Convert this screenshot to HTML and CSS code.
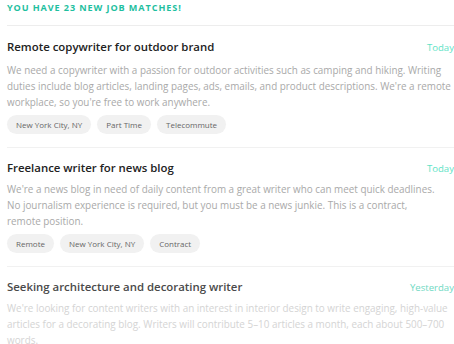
FILE: index.html
```html
<!DOCTYPE html>
<html lang="en">
<head>
  <meta charset="UTF-8">
  <title>Job Matches</title>
  <link rel="stylesheet" href="styles.css">
</head>
<body>
  <div class="matches">
    <h2 class="matches-title">You have 23 new job matches!</h2>

    <div class="job">
      <div class="job-head">
        <h3 class="job-title">Remote copywriter for outdoor brand</h3>
        <span class="job-date">Today</span>
      </div>
      <p class="job-desc">We need a copywriter with a passion for outdoor activities such as camping and hiking. Writing duties include blog articles, landing pages, ads, emails, and product descriptions. We're a remote workplace, so you're free to work anywhere.</p>
      <div class="tags">
        <span class="tag">New York City, NY</span>
        <span class="tag">Part Time</span>
        <span class="tag">Telecommute</span>
      </div>
    </div>

    <div class="job">
      <div class="job-head">
        <h3 class="job-title">Freelance writer for news blog</h3>
        <span class="job-date">Today</span>
      </div>
      <p class="job-desc">We're a news blog in need of daily content from a great writer who can meet quick deadlines.<br>No journalism experience is required, but you must be a news junkie. This is a contract,<br>remote position.</p>
      <div class="tags">
        <span class="tag">Remote</span>
        <span class="tag">New York City, NY</span>
        <span class="tag">Contract</span>
      </div>
    </div>

    <div class="job job-faded">
      <div class="job-head">
        <h3 class="job-title">Seeking architecture and decorating writer</h3>
        <span class="job-date">Yesterday</span>
      </div>
      <p class="job-desc">We're looking for content writers with an interest in interior design to write engaging, high-value articles for a decorating blog. Writers will contribute 5–10 articles a month, each about 500–700 words.</p>
    </div>
  </div>
</body>
</html>
```

FILE: styles.css
```css
body {
  margin: 0;
  padding: 0;
  overflow: hidden;
  font-family: 'Open Sans', sans-serif;
  background: #fff;
  color: #222;
}

.matches {
  padding-left: 7px;
}

.matches-title {
  margin: 0;
  padding: 1px 0 11px;
  font-size: 9.1px;
  line-height: 13px;
  font-weight: 700;
  letter-spacing: 0.9px;
  text-transform: uppercase;
  color: #1fbf9f;
  border-bottom: 1px solid #ededed;
}

.job {
  padding: 11px 0 13px;
  border-bottom: 1px solid #f1f1f1;
}

.job:first-of-type {
  padding-top: 12px;
}

.job-head {
  display: flex;
  justify-content: space-between;
  align-items: baseline;
}

.job-title {
  margin: 0;
  font-size: 11.4px;
  line-height: 18px;
  font-weight: 600;
  color: #222;
}

.job-date {
  font-size: 9.6px;
  color: #5fe3c6;
}

.job-desc {
  margin: 4px 0 0;
  font-size: 9.9px;
  line-height: 16px;
  color: #a9a9a9;
}

.job:first-of-type .job-desc {
  margin-top: 6px;
}

.tags {
  display: flex;
  gap: 6px;
  margin-top: 5px;
}

.tag {
  display: inline-block;
  padding: 0 9px;
  height: 19px;
  line-height: 19px;
  font-size: 8px;
  color: #666;
  background: #f1f1f1;
  border-radius: 10px;
}

.job-faded {
  border-bottom: none;
}

.job-faded .job-title {
  color: #4a4a4a;
}

.job-faded .job-desc {
  color: #d4d4d4;
}

.job-faded .job-date {
  color: #6fd9c3;
}
```
